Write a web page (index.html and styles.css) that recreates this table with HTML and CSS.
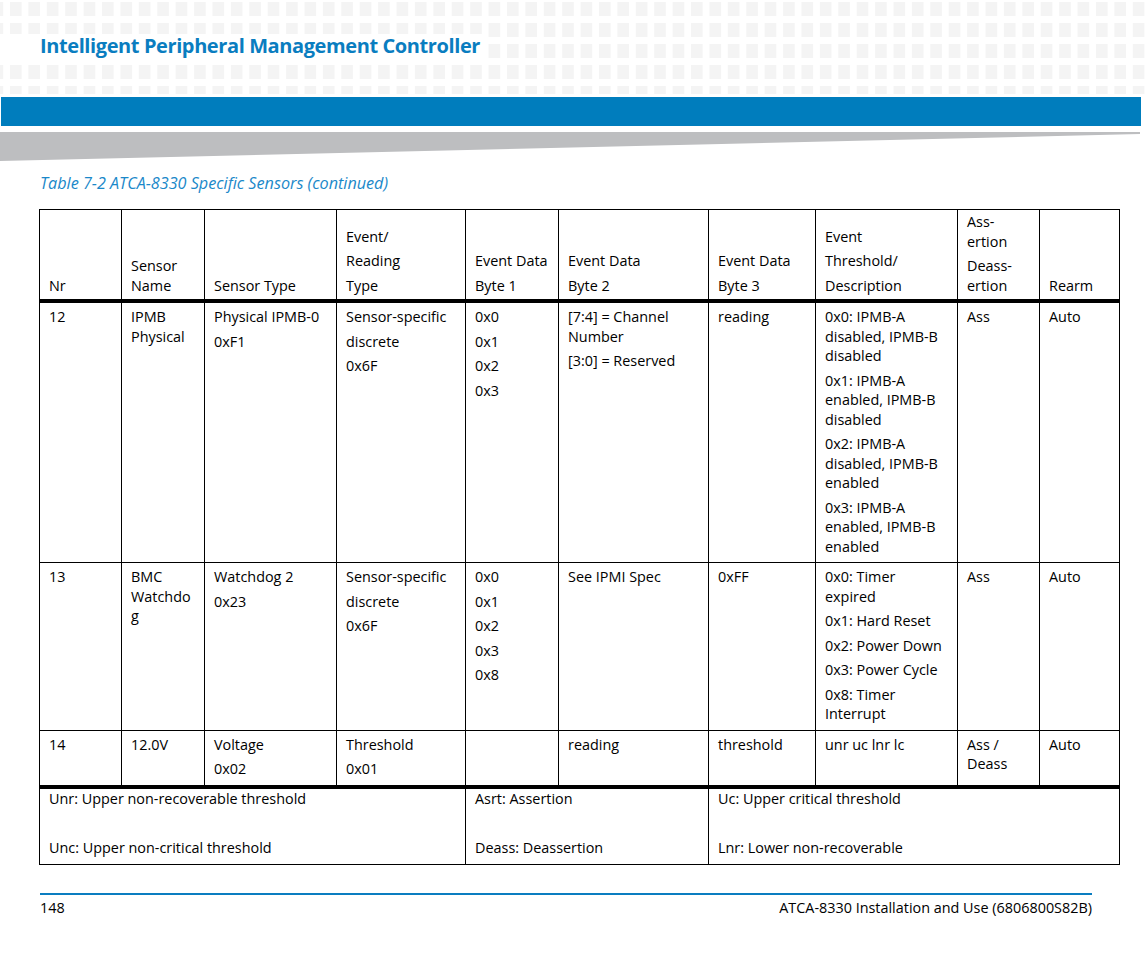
FILE: index.html
```html
<!DOCTYPE html>
<html>
<head>
<meta charset="utf-8">
<link rel="stylesheet" href="styles.css">
</head>
<body>
<div class="page">
  <header class="masthead">
    <h1 class="title">Intelligent Peripheral Management Controller</h1>
  </header>
  <div class="bluebar"></div>
  <div class="wedge"></div>
  <div class="caption">Table 7-2 ATCA-8330 Specific Sensors (continued)</div>
  <table class="sensors">
    <colgroup>
      <col class="c1"><col class="c2"><col class="c3"><col class="c4"><col class="c5">
      <col class="c6"><col class="c7"><col class="c8"><col class="c9"><col class="c10">
    </colgroup>
    <thead>
      <tr>
        <th><p>Nr</p></th>
        <th><p>Sensor<br>Name</p></th>
        <th><p>Sensor Type</p></th>
        <th><p>Event/</p><p>Reading</p><p>Type</p></th>
        <th><p>Event Data</p><p>Byte 1</p></th>
        <th><p>Event Data</p><p>Byte 2</p></th>
        <th><p>Event Data</p><p>Byte 3</p></th>
        <th><p>Event</p><p>Threshold/</p><p>Description</p></th>
        <th><p>Ass-<br>ertion</p><p>Deass-<br>ertion</p></th>
        <th><p>Rearm</p></th>
      </tr>
    </thead>
    <tbody>
      <tr>
        <td><p>12</p></td>
        <td><p>IPMB<br>Physical</p></td>
        <td><p>Physical IPMB-0</p><p>0xF1</p></td>
        <td><p>Sensor-specific</p><p>discrete</p><p>0x6F</p></td>
        <td><p>0x0</p><p>0x1</p><p>0x2</p><p>0x3</p></td>
        <td><p>[7:4] = Channel<br>Number</p><p>[3:0] = Reserved</p></td>
        <td><p>reading</p></td>
        <td>
          <p>0x0: IPMB-A<br>disabled, IPMB-B<br>disabled</p>
          <p>0x1: IPMB-A<br>enabled, IPMB-B<br>disabled</p>
          <p>0x2: IPMB-A<br>disabled, IPMB-B<br>enabled</p>
          <p>0x3: IPMB-A<br>enabled, IPMB-B<br>enabled</p>
        </td>
        <td><p>Ass</p></td>
        <td><p>Auto</p></td>
      </tr>
      <tr>
        <td><p>13</p></td>
        <td><p>BMC<br>Watchdo<br>g</p></td>
        <td><p>Watchdog 2</p><p>0x23</p></td>
        <td><p>Sensor-specific</p><p>discrete</p><p>0x6F</p></td>
        <td><p>0x0</p><p>0x1</p><p>0x2</p><p>0x3</p><p>0x8</p></td>
        <td><p>See IPMI Spec</p></td>
        <td><p>0xFF</p></td>
        <td>
          <p>0x0: Timer<br>expired</p>
          <p>0x1: Hard Reset</p>
          <p>0x2: Power Down</p>
          <p>0x3: Power Cycle</p>
          <p>0x8: Timer<br>Interrupt</p>
        </td>
        <td><p>Ass</p></td>
        <td><p>Auto</p></td>
      </tr>
      <tr class="last">
        <td><p>14</p></td>
        <td><p>12.0V</p></td>
        <td><p>Voltage</p><p>0x02</p></td>
        <td><p>Threshold</p><p>0x01</p></td>
        <td></td>
        <td><p>reading</p></td>
        <td><p>threshold</p></td>
        <td><p>unr uc lnr lc</p></td>
        <td><p>Ass /<br>Deass</p></td>
        <td><p>Auto</p></td>
      </tr>
    </tbody>
    <tfoot>
      <tr>
        <td colspan="4"><p>Unr: Upper non-recoverable threshold</p><p>&nbsp;</p><p>Unc: Upper non-critical threshold</p></td>
        <td colspan="2"><p>Asrt: Assertion</p><p>&nbsp;</p><p>Deass: Deassertion</p></td>
        <td colspan="4"><p>Uc: Upper critical threshold</p><p>&nbsp;</p><p>Lnr: Lower non-recoverable</p></td>
      </tr>
    </tfoot>
  </table>
  <footer class="pagefoot">
    <span class="pagenum">148</span>
    <span class="doc">ATCA-8330 Installation and Use (6806800S82B)</span>
  </footer>
</div>
</body>
</html>
```
FILE: styles.css
```css
html, body {
  margin: 0;
  padding: 0;
  background: #fff;
}
body {
  font-family: "Open Sans", "Noto Sans", sans-serif;
  color: #000;
  font-size: 14.4px;
}
.page {
  width: 1145px;
  height: 954px;
  overflow: hidden;
}
.masthead {
  height: 94px;
  padding-top: 34px;
  box-sizing: border-box;
  background:
    linear-gradient(to bottom, #fff 2px, transparent 2px, transparent 16px, #fff 16px) 0 0 / 100% 21px,
    linear-gradient(to right, #f4f4f4 12px, #fff 12px) 10px 0 / 18.42px 100%;
}
.title {
  display: inline-block;
  margin: 0;
  padding: 0 4px 0 40px;
  background: #fff;
  color: #0a7dc0;
  font-size: 20px;
  font-weight: 700;
  line-height: 24px;
  letter-spacing: -0.4px;
}
.bluebar {
  margin: 3px 0 0 1px;
  width: 1140px;
  height: 29px;
  background: #007dbd;
}
.wedge {
  margin-top: 6px;
  width: 1140px;
  height: 29px;
  background: #bdbec0;
  clip-path: polygon(0 0, 100% 0, 100% 2px, 0 100%);
}
.caption {
  margin: 12px 0 0 40px;
  color: #1a88c9;
  font-style: italic;
  font-size: 16.2px;
  line-height: 20px;
}
.sensors {
  margin: 16px 0 0 39px;
  border-collapse: collapse;
  table-layout: fixed;
  width: 1080px;
  border: 1px solid #000;
}
.c1 { width: 82px; }
.c2 { width: 83px; }
.c3 { width: 132px; }
.c4 { width: 129px; }
.c5 { width: 93px; }
.c6 { width: 150px; }
.c7 { width: 107px; }
.c8 { width: 142px; }
.c9 { width: 82px; }
.c10 { width: 80px; }
.sensors th,
.sensors td {
  border: 1px solid #000;
  padding: 4px 6px 6px 9px;
  text-align: left;
  font-weight: 400;
  line-height: 19.5px;
  vertical-align: top;
  white-space: nowrap;
}
.sensors th {
  vertical-align: bottom;
  padding-top: 2px;
  padding-bottom: 4px;
  border-bottom: 4px solid #000;
}
.sensors p {
  margin: 0;
}
.sensors p + p {
  margin-top: 5px;
}
.sensors tr.last td {
  border-bottom: 4px solid #000;
}
.sensors tfoot td {
  padding-top: 0;
  padding-bottom: 7px;
}
.pagefoot {
  margin: 28px 0 0 40px;
  width: 1052px;
  border-top: 2px solid #0a7dc0;
  display: flex;
  justify-content: space-between;
  padding-top: 3px;
  line-height: 20px;
}
```
